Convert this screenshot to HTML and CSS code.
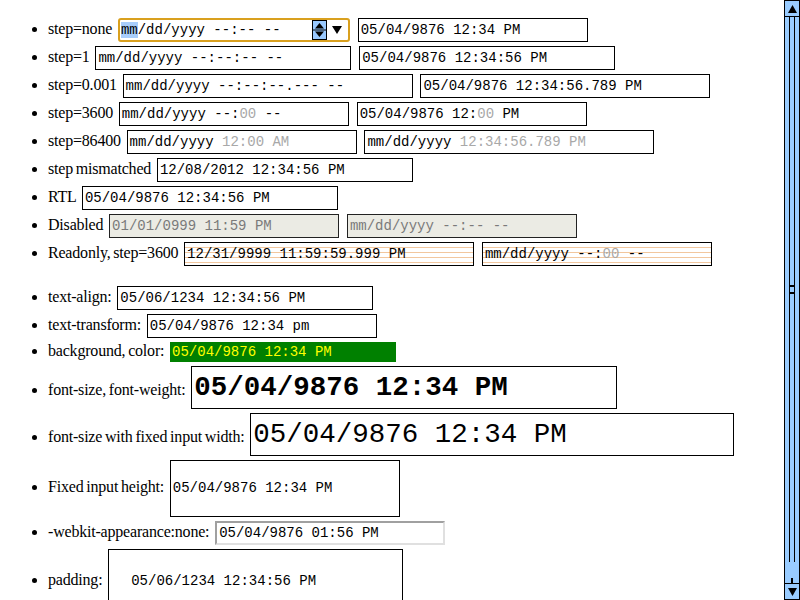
FILE: index.html
```html
<!DOCTYPE html>
<html>
<head>
<meta charset="utf-8">
<link rel="stylesheet" href="styles.css">
</head>
<body>
<div class="page">
<ul>
<li>step=none <span class="f focus w232"><span class="ftext"><span class="sel">mm</span>/dd/yyyy --:-- --</span><svg class="spin" width="15" height="20" viewBox="0 0 15 20"><rect x="0.5" y="0.5" width="14" height="19" fill="#99c9ff" stroke="#000"/><line x1="0" y1="10" x2="15" y2="10" stroke="#000"/><polygon points="7.5,3 12,8.5 3,8.5" fill="#000"/><polygon points="3,11.5 12,11.5 7.5,17" fill="#000"/></svg><svg class="drop" width="10" height="8" viewBox="0 0 10 8"><polygon points="0,0 10,0 5,8" fill="#000"/></svg></span> <span class="f w230">05/04/9876 12:34 PM</span></li>
<li>step=1 <span class="f w256">mm/dd/yyyy --:--:-- --</span> <span class="f w256">05/04/9876 12:34:56 PM</span></li>
<li>step=0.001 <span class="f w290">mm/dd/yyyy --:--:--.--- --</span> <span class="f w290">05/04/9876 12:34:56.789 PM</span></li>
<li>step=3600 <span class="f w230">mm/dd/yyyy --:<span class="g">00</span> --</span> <span class="f w230">05/04/9876 12:<span class="g">00</span> PM</span></li>
<li>step=86400 <span class="f w230">mm/dd/yyyy <span class="g">12:00 AM</span></span> <span class="f w290">mm/dd/yyyy <span class="g">12:34:56.789 PM</span></span></li>
<li>step mismatched <span class="f w256">12/08/2012 12:34:56 PM</span></li>
<li>RTL <span class="f w256">05/04/9876 12:34:56 PM</span></li>
<li>Disabled <span class="f w230 disabled">01/01/0999 11:59 PM</span> <span class="f w230 disabled">mm/dd/yyyy --:-- --</span></li>
<li>Readonly, step=3600 <span class="f w290 readonly">12/31/9999 11:59:59.999 PM</span> <span class="f w230 readonly">mm/dd/yyyy --:<span class="g">00</span> --</span></li>
</ul>
<ul>
<li>text-align: <span class="f w256">05/06/1234 12:34:56 PM</span></li>
<li>text-transform: <span class="f w230">05/04/9876 12:34 pm</span></li>
<li>background, color: <span class="f colored">05/04/9876 12:34 PM</span></li>
<li>font-size, font-weight: <span class="f big">05/04/9876 12:34 PM</span></li>
<li>font-size with fixed input width: <span class="f wide">05/04/9876 12:34 PM</span></li>
<li>Fixed input height: <span class="f w230 tall">05/04/9876 12:34 PM</span></li>
<li>-webkit-appearance:none: <span class="f w230 plain">05/04/9876 01:56 PM</span></li>
<li>padding: <span class="f padded">05/06/1234 12:34:56 PM</span></li>
</ul>
</div>
<div class="sb">
  <div class="sb-btn up"><svg width="9" height="8" viewBox="0 0 9 8"><polygon points="4.5,0 9,8 0,8" fill="#000"/></svg></div>
  <div class="sb-thumb"><span class="grip"></span></div>
  <div class="sb-track"><span class="stub"></span></div>
  <div class="sb-btn down"><svg width="9" height="8" viewBox="0 0 9 8"><polygon points="0,0 9,0 4.5,8" fill="#000"/></svg></div>
</div>
</body>
</html>
```
FILE: styles.css
```css
html, body {
  margin: 0;
  height: 600px;
  overflow: hidden;
  background: #fff;
}
body {
  display: flex;
  font-family: "Liberation Serif", "Times New Roman", serif;
  font-size: 16px;
  letter-spacing: -0.2px;
  word-spacing: -1px;
  color: #000;
}
.page {
  flex: 1;
  min-width: 0;
  padding: 0 8px;
}
ul {
  margin: 16px 0;
  padding-left: 40px;
  list-style: disc;
}
.f {
  display: inline-block;
  box-sizing: border-box;
  height: 24px;
  line-height: 22px;
  border: 1px solid #000;
  padding: 0 2px;
  margin: 2px 2px 2px 3px;
  font-family: "Liberation Mono", "Courier New", monospace;
  font-size: 14px;
  letter-spacing: 0;
  word-spacing: 0;
  white-space: pre;
  vertical-align: baseline;
  background: #fff;
  color: #000;
}
.w230 { width: 230px; }
.w232 { width: 232px; }
.w256 { width: 256px; }
.w290 { width: 290px; }
.g { color: #a8a8a8; }
.focus {
  display: inline-flex;
  align-items: center;
  border: 2px solid #d9a01e;
  border-radius: 3px;
  padding: 0 4px 0 1px;
}
.ftext { flex: 1; }
.sel { background: #a8cdfb; }
.spin { display: block; margin-right: 5px; }
.drop { display: block; margin-right: 2px; }
.disabled {
  background: #ebebe4;
  color: #7a7a7a;
  border-color: #222;
}
.readonly {
  background: repeating-linear-gradient(to bottom, #fff 0, #fff 4px, #f2c79e 4px, #f2c79e 5px);
}
.colored {
  width: 226px;
  height: 20px;
  line-height: 20px;
  border: 0;
  background: #008000;
  color: #ffff00;
}
.big {
  width: 426px;
  height: 43px;
  line-height: 41px;
  font-size: 27.5px;
  font-weight: bold;
}
.wide {
  width: 484px;
  height: 43px;
  line-height: 41px;
  font-size: 27.5px;
}
.tall {
  height: 57px;
  line-height: 55px;
}
.plain {
  height: 24px;
  line-height: 20px;
  border-width: 2px;
  border-style: solid;
  border-color: #a0a0a0 #e0e0e0 #e0e0e0 #a0a0a0;
}
.padded {
  width: 295px;
  height: 64px;
  padding: 20px 22px;
  line-height: 22px;
}
.sb {
  width: 16px;
  flex: none;
  display: flex;
  flex-direction: column;
  background: #99ccff;
}
.sb-btn {
  height: 17px;
  flex: none;
  box-sizing: border-box;
  border: 1px solid #000;
  display: flex;
  align-items: center;
  justify-content: center;
}
.sb-thumb {
  flex: 1;
  border-left: 1px solid #000;
  border-right: 1px solid #000;
  background: linear-gradient(to right, transparent 4px, #000 4px, #000 5px, transparent 5px, transparent 9px, #000 9px, #000 10px, transparent 10px);
  display: flex;
  align-items: center;
  justify-content: center;
}
.grip {
  width: 5px;
  height: 5px;
  margin-left: 1px;
  border-top: 2px solid #000;
  border-bottom: 2px solid #000;
}
.sb-track {
  height: 21px;
  flex: none;
  border-left: 1px solid #000;
  border-right: 1px solid #000;
  display: flex;
  justify-content: center;
  align-items: flex-end;
}
.stub {
  width: 2px;
  height: 5px;
  background: #000;
}
```
